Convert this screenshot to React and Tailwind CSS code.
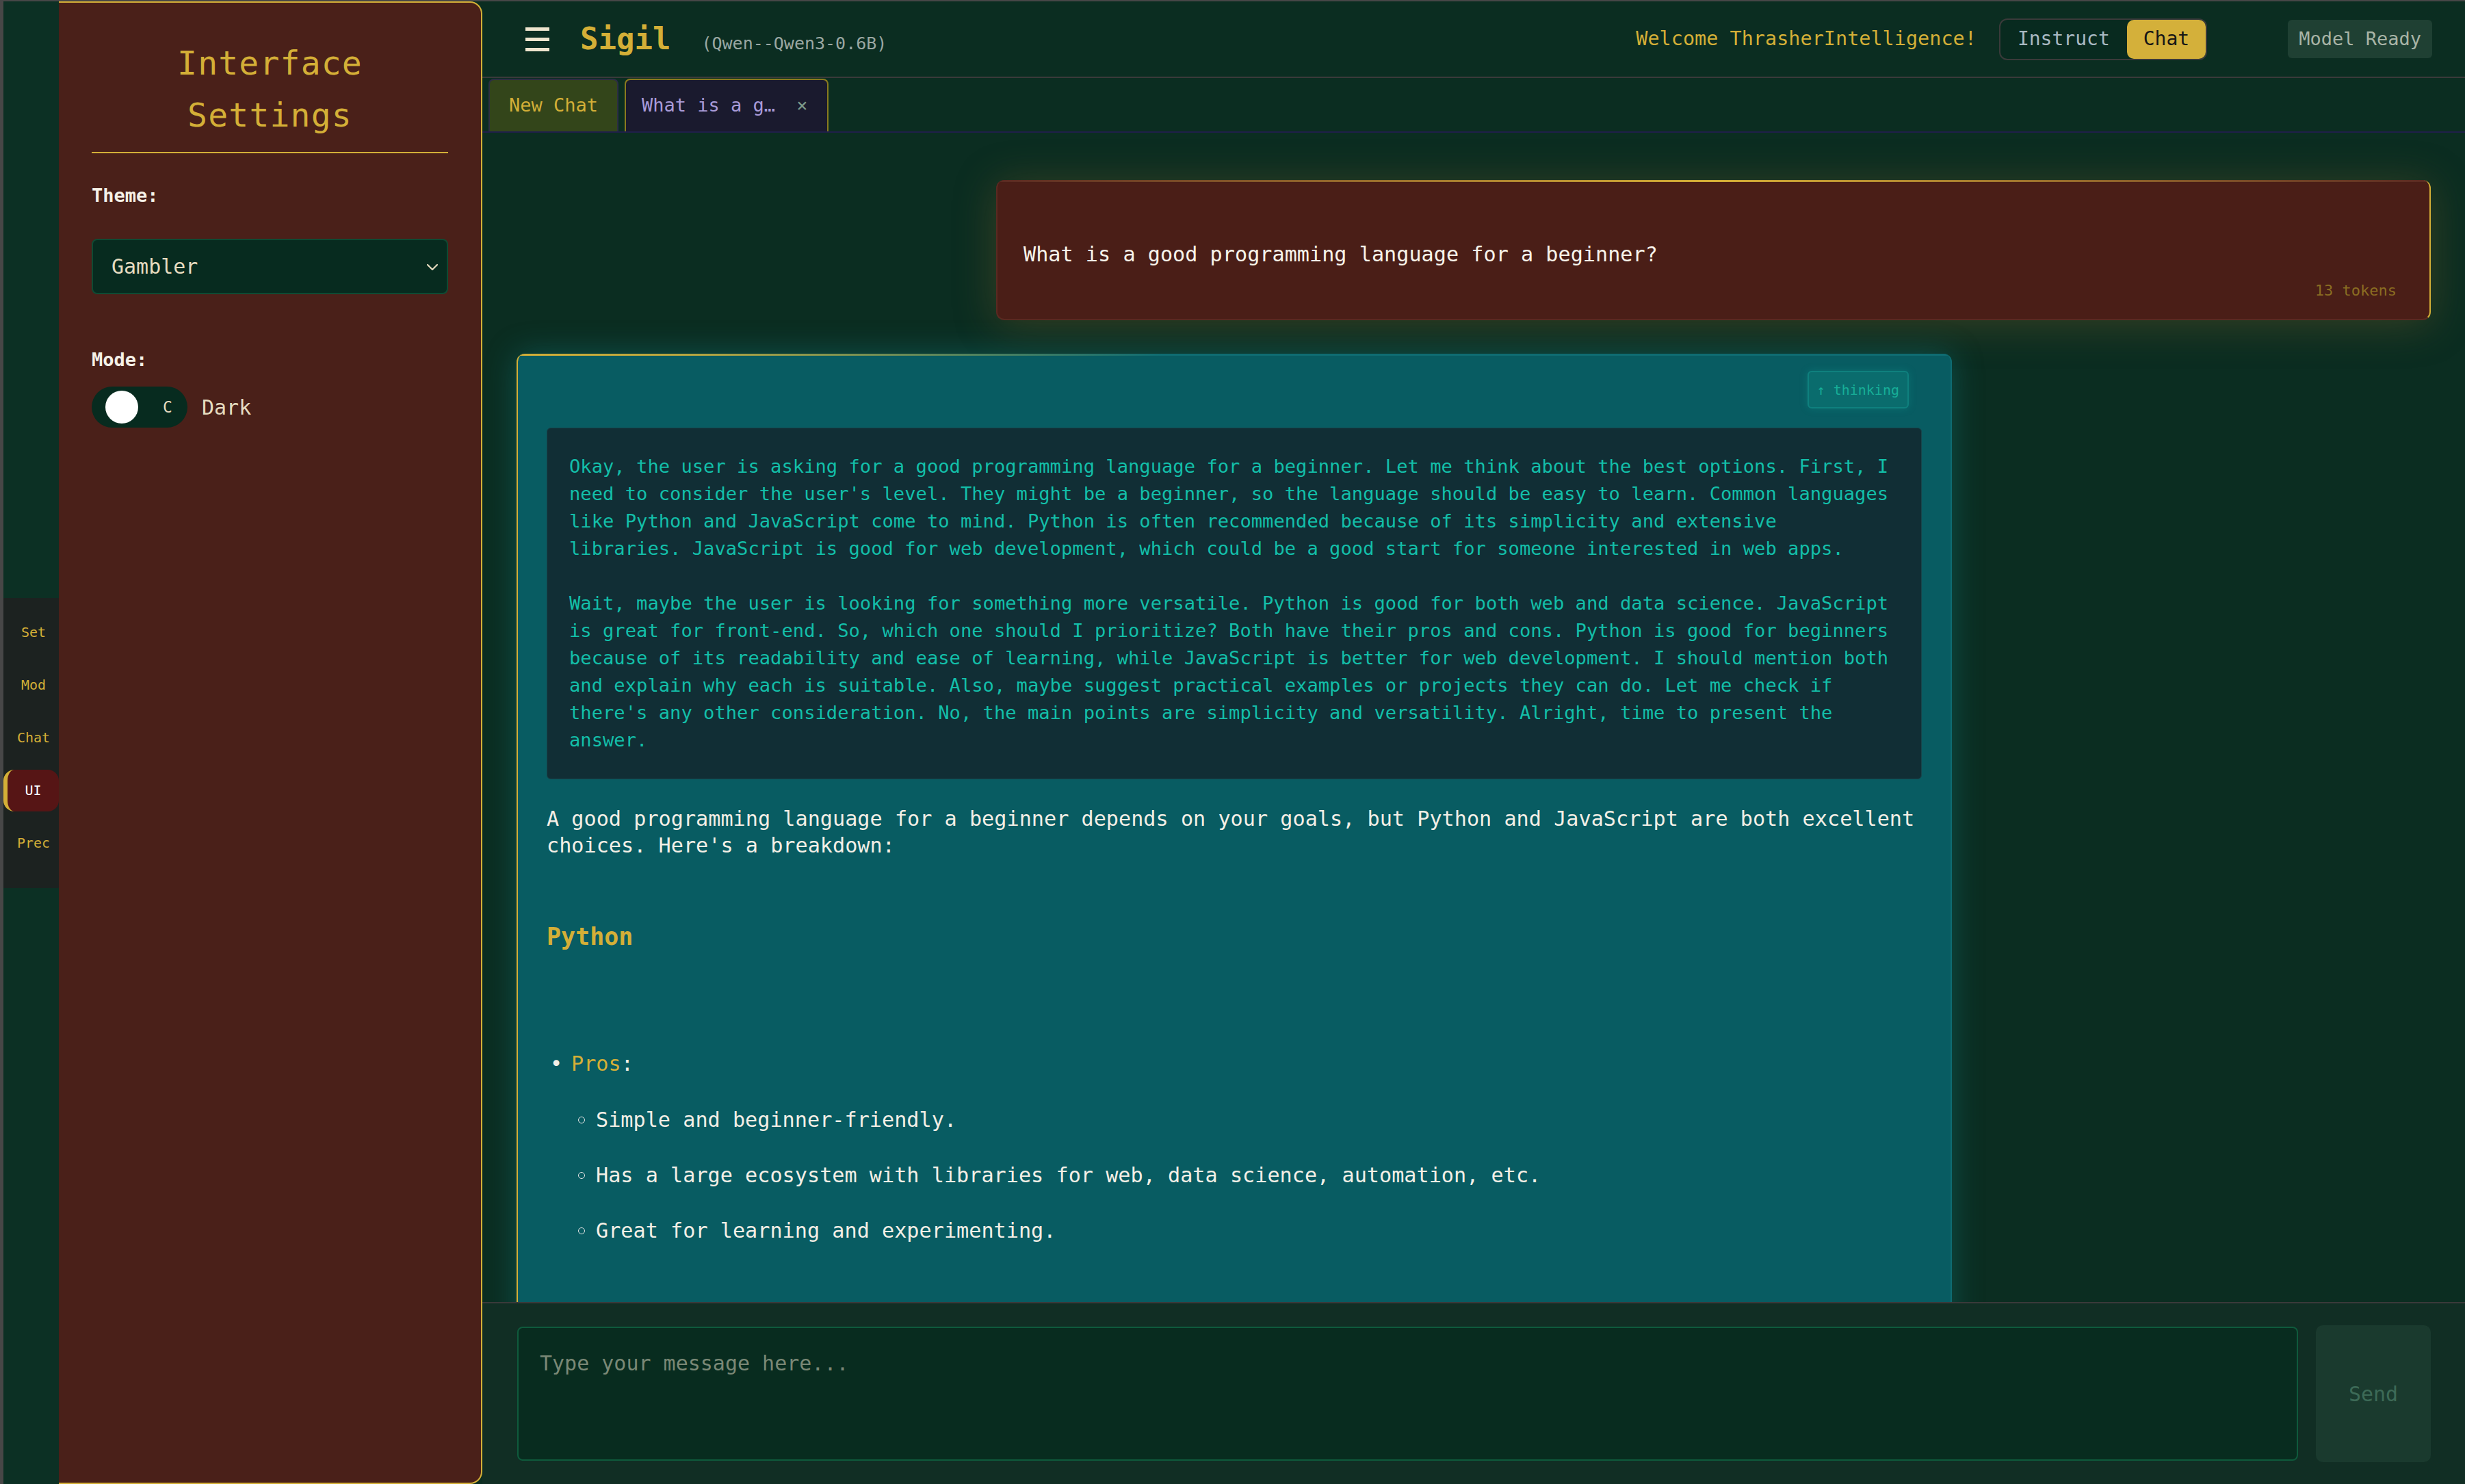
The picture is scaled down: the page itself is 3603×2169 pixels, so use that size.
const THINKING = [
  "Okay, the user is asking for a good programming language for a beginner. Let me think about the best options. First, I",
  "need to consider the user's level. They might be a beginner, so the language should be easy to learn. Common languages",
  "like Python and JavaScript come to mind. Python is often recommended because of its simplicity and extensive",
  "libraries. JavaScript is good for web development, which could be a good start for someone interested in web apps.",
  "",
  "Wait, maybe the user is looking for something more versatile. Python is good for both web and data science. JavaScript",
  "is great for front-end. So, which one should I prioritize? Both have their pros and cons. Python is good for beginners",
  "because of its readability and ease of learning, while JavaScript is better for web development. I should mention both",
  "and explain why each is suitable. Also, maybe suggest practical examples or projects they can do. Let me check if",
  "there's any other consideration. No, the main points are simplicity and versatility. Alright, time to present the",
  "answer.",
].join("\n");

const NAV = ["Set", "Mod", "Chat", "UI", "Prec"];

const PROS = [
  "Simple and beginner-friendly.",
  "Has a large ecosystem with libraries for web, data science, automation, etc.",
  "Great for learning and experimenting.",
];

function NavStrip() {
  return (
    <div className="w-[81px] shrink-0 bg-[#0c3024] flex flex-col justify-center">
      <div className="h-[424px] bg-[#1c2220] flex flex-col gap-[16px] pt-[20px]">
        {NAV.map((n) =>
          n === "UI" ? (
            <div
              key={n}
              className="h-[61px] flex items-center justify-center rounded-[16px] border-l-[6px] border-[#d4af37] bg-[#561515] text-[20px] text-white"
            >
              {n}
            </div>
          ) : (
            <div key={n} className="h-[61px] pl-[7px] flex items-center justify-center text-[20px] text-[#d4af37]">
              {n}
            </div>
          )
        )}
      </div>
    </div>
  );
}

function SettingsPanel() {
  return (
    <div className="w-[619px] shrink-0 bg-[#4a2019] border-t-2 border-r-2 border-b-2 border-[#d4af37] rounded-r-[18px] px-[48px] pt-[50px]">
      <h2 className="text-[48px] leading-[76px] tracking-[1.2px] text-center text-[#d4af37] pb-[16px] border-b-2 border-[#d4af37]">
        Interface
        <br />
        Settings
      </h2>
      <div className="mt-[42px] text-[27px] leading-[40px] font-bold text-[#f6f1e7]">Theme:</div>
      <div className="mt-[43px] h-[81px] rounded-[8px] border-2 border-[#0f4a33] bg-[#072b1f] flex items-center justify-between pl-[27px] pr-[12px]">
        <span className="text-[30px] text-[#e6dcc0]">Gambler</span>
        <svg width="18" height="12" viewBox="0 0 18 12" fill="none">
          <path d="M2 3 L9 10 L16 3" stroke="#e6dcc0" strokeWidth="2.2" strokeLinecap="round" strokeLinejoin="round" />
        </svg>
      </div>
      <div className="mt-[76px] text-[27px] leading-[40px] font-bold text-[#f6f1e7]">Mode:</div>
      <div className="mt-[19px] flex items-center gap-[21px]">
        <div className="w-[140px] h-[60px] rounded-full bg-[#072b1f] flex items-center pl-[20px]">
          <div className="w-[48px] h-[48px] rounded-full bg-white" />
          <span className="ml-[36px] text-[23px] text-[#e6dcc0]">C</span>
        </div>
        <span className="text-[30px] text-[#e6dcc0]">Dark</span>
      </div>
    </div>
  );
}

function Header() {
  return (
    <header className="h-[112px] shrink-0 border-b-2 border-[#3a3a3a] flex items-center pl-[63px] pr-[48px]">
      <div className="w-[35px] flex flex-col gap-[10px]">
        <span className="block h-[5px] bg-[#efe6cf]" />
        <span className="block h-[5px] bg-[#efe6cf]" />
        <span className="block h-[5px] bg-[#efe6cf]" />
      </div>
      <div className="flex items-baseline">
        <span className="ml-[45px] text-[44px] font-bold text-[#d4af37]">Sigil</span>
        <span className="ml-[45px] text-[25px] text-[#9aa7a2]">(Qwen--Qwen3-0.6B)</span>
      </div>
      <div className="ml-auto flex items-center">
        <span className="text-[28.5px] text-[#d4af37]">Welcome ThrasherIntelligence!</span>
        <div className="ml-[33px] h-[61px] flex border-2 border-[#3a3a3a] rounded-[12px] bg-[#082a1f]">
          <div className="px-[25px] flex items-center text-[28px] text-[#a9b9c2]">Instruct</div>
          <div className="px-[24px] flex items-center text-[28px] text-[#161616] bg-[#d4b03a] rounded-[10px]">Chat</div>
        </div>
        <div className="ml-[118px] h-[56px] px-[16px] flex items-center rounded-[6px] bg-[#1f4033] text-[27px] text-[#a8b4a6]">
          Model Ready
        </div>
      </div>
    </header>
  );
}

function Tabs() {
  return (
    <div className="h-[80px] shrink-0 border-b-2 border-[#1f1f4a] flex items-end gap-[9px] pl-[9px]">
      <div className="h-[77px] px-[28px] flex items-center bg-[#33451a] border-2 border-b-0 border-[#2c2e44] rounded-t-[8px] text-[27px] text-[#d4af37]">
        New Chat
      </div>
      <div className="h-[77px] pl-[23px] pr-[29px] flex items-center bg-[#1a1a2e] border-2 border-b-0 border-[#8a7a1e] rounded-t-[8px] text-[27px]">
        <span className="text-[#a99bd9]">What is a g…</span>
        <span className="ml-[31px] text-[#7c9a8c]">×</span>
      </div>
    </div>
  );
}

function UserMessage() {
  return (
    <div className="self-end shrink-0 w-[2097px] rounded-[12px] overflow-hidden border-x-2 border-b-2 border-l-[#5a2a22] border-r-[#d4af37] border-b-[#5a2a22] bg-[#4a1e17] shadow-[0_6px_60px_rgba(140,100,40,0.35)]">
      <div className="h-[3px] bg-[linear-gradient(90deg,#5a2a22,#d4af37_50%,#5a2a22)]" />
      <div className="pl-[38px] pr-[48px] pt-[86px] pb-[26px]">
        <p className="text-[30.2px] leading-[39px] text-[#f7f3ea]">What is a good programming language for a beginner?</p>
        <div className="mt-[19px] text-right text-[22px] leading-[30px] text-[#8a6d22]">13 tokens</div>
      </div>
    </div>
  );
}

function AssistantMessage() {
  return (
    <div className="mt-[49px] self-start shrink-0 w-[2098px] rounded-[12px] overflow-hidden border-l-2 border-l-[#d4af37] border-r-2 border-r-[#0f6c72] bg-[#085c62] shadow-[0_0_45px_rgba(20,150,160,0.35)]">
      <div className="h-[3px] bg-[linear-gradient(90deg,#d4af37,#b8a640_12%,#0f6c72_45%)]" />
      <div className="px-[42px] pt-[22px] pb-[240px]">
        <div className="flex justify-end pr-[19px]">
          <div className="h-[55px] px-[12px] flex items-center rounded-[6px] bg-[#0a6c6d] border-2 border-[#0f807e] text-[20px] text-[#17ae98] shadow-[0_0_12px_rgba(20,170,160,0.25)]">
            ↑ thinking
          </div>
        </div>
        <div className="mt-[28px] rounded-[6px] bg-[#112e35] border border-[#18454b] px-[32px] py-[36px] whitespace-pre text-[27.15px] leading-[40px] text-[#13bfa9]">
          {THINKING}
        </div>
        <p className="mt-[38px] text-[30.2px] leading-[39px] text-[#f3efe6]">
          A good programming language for a beginner depends on your goals, but Python and JavaScript are both excellent choices. Here's a breakdown:
        </p>
        <h3 className="mt-[92px] text-[35px] leading-[45px] font-semibold text-[#d4af37]">Python</h3>
        <div className="mt-[143px] pl-[5px] flex text-[30.2px] leading-[39px] text-[#f3efe6]">
          <span className="w-[31px]">•</span>
          <span>
            <span className="text-[#d4af37]">Pros</span>:
          </span>
        </div>
        <div className="mt-[43px] flex flex-col gap-[42px]">
          {PROS.map((p) => (
            <div key={p} className="pl-[46px] flex items-center text-[30.2px] leading-[39px] text-[#f3efe6]">
              <span className="w-[10px] h-[10px] rounded-full border-[1.5px] border-[#e8e8e8] shrink-0" />
              <span className="ml-[16px]">{p}</span>
            </div>
          ))}
        </div>
      </div>
    </div>
  );
}

function InputArea() {
  return (
    <div className="h-[266px] shrink-0 border-t-2 border-[#3a3a3a] bg-[#112e24] flex items-center gap-[26px] pl-[51px] pr-[50px]">
      <textarea
        className="flex-1 h-[196px] bg-[#082c1f] border-2 border-[#0f5a3c] rounded-[8px] pl-[31px] pt-[32px] text-[30px] leading-[39px] text-[#e6dcc0] placeholder:text-[#7a8876] resize-none outline-none font-['DejaVu_Sans_Mono',monospace]"
        placeholder="Type your message here..."
      />
      <button className="w-[168px] h-[200px] rounded-[10px] bg-[#1a3a2e] text-[30px] text-[#3d6a57] font-['DejaVu_Sans_Mono',monospace]">
        Send
      </button>
    </div>
  );
}

export default function App() {
  return (
    <div className="w-[3603px] h-[2169px] flex overflow-hidden border-t-2 border-l-[5px] border-[#474747] bg-[#0b2d21] font-['DejaVu_Sans_Mono',monospace]">
      <NavStrip />
      <SettingsPanel />
      <div className="flex-1 min-w-0 flex flex-col">
        <Header />
        <Tabs />
        <div className="flex-1 min-h-0 overflow-hidden px-[50px] pt-[69px] flex flex-col">
          <UserMessage />
          <AssistantMessage />
        </div>
        <InputArea />
      </div>
    </div>
  );
}
